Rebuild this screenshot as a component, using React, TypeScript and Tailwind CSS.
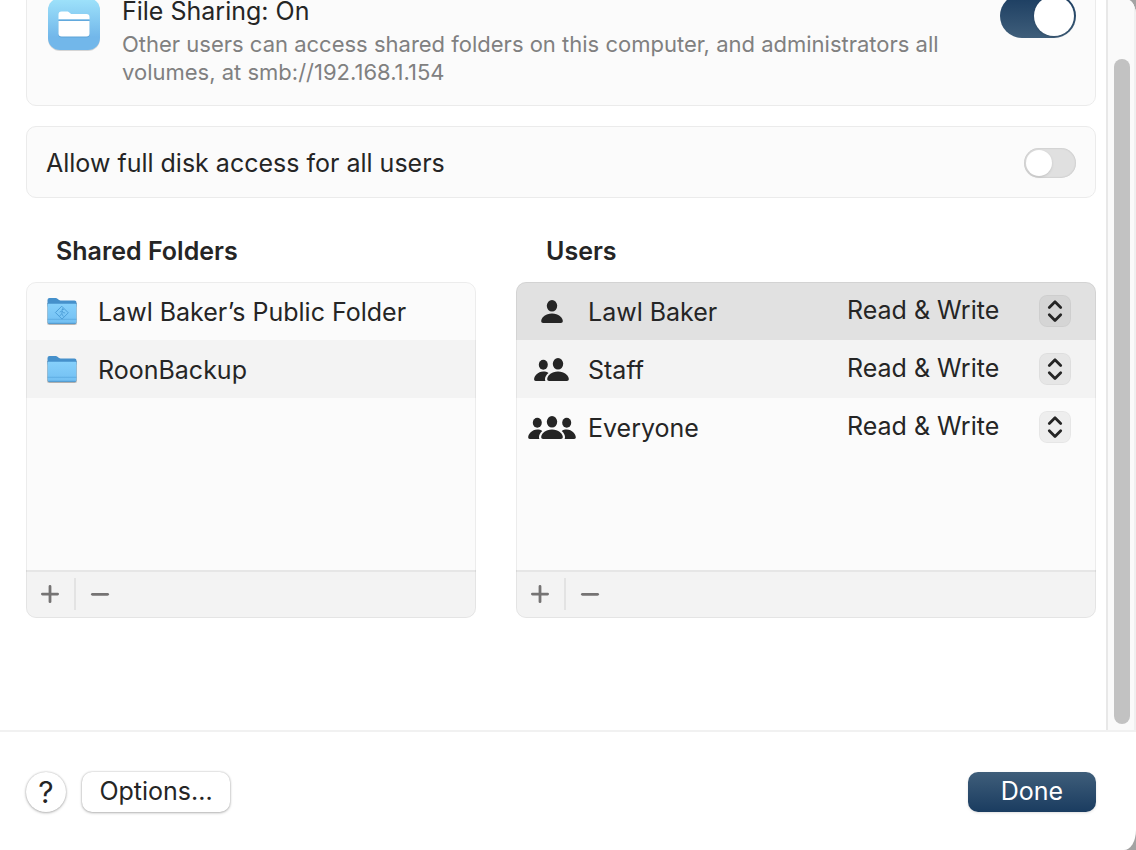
import { useState } from 'react';

const folders = [
  { name: 'Lawl Baker’s Public Folder', isPublic: true },
  { name: 'RoonBackup', isPublic: false },
];

const users = [
  { name: 'Lawl Baker', people: 1 },
  { name: 'Staff', people: 2 },
  { name: 'Everyone', people: 3 },
];

const permissions = ['Read & Write', 'Read Only', 'Write Only (Drop Box)'];

function FileSharingIcon() {
  return (
    <svg viewBox="0 0 54 54" className="h-[54px] w-[54px] shrink-0" aria-hidden="true">
      <defs>
        <linearGradient id="tile" x1="0" y1="0" x2="0" y2="1">
          <stop offset="0" stopColor="#9fe3fb" />
          <stop offset="0.75" stopColor="#72b7ea" />
        </linearGradient>
      </defs>
      <rect x="1" y="2" width="52" height="52" rx="12" fill="#000" opacity="0.15" />
      <rect x="1" y="1" width="52" height="52" rx="12" fill="url(#tile)" />
      <path d="M11.500 24h31v13.500a3 3 0 0 1-3 3h-25a3 3 0 0 1-3-3z" fill="#3e87bb" opacity="0.4" />
      <path d="M11.500 22.500v-5a3 3 0 0 1 3-3h5.500c2.500 0 2.800 2.500 5 2.500h14.500a3 3 0 0 1 3 3v2.500z" fill="#fff" />
      <path d="M11.500 22.500h31v1.500h-31z" fill="#62a9dd" />
      <path d="M11.500 24h31v12.500a3 3 0 0 1-3 3h-25a3 3 0 0 1-3-3z" fill="#fff" />
    </svg>
  );
}

function FolderIcon({ isPublic }: { isPublic: boolean }) {
  return (
    <svg viewBox="0 0 32 32" className="h-8 w-8 shrink-0" aria-hidden="true">
      <defs>
        <linearGradient id="folder" x1="0" y1="0" x2="0" y2="1">
          <stop offset="0" stopColor="#86d0fb" />
          <stop offset="1" stopColor="#72bff2" />
        </linearGradient>
      </defs>
      <path d="M1 8h30v20.500a1.500 1.500 0 0 1-1.500 1.500h-27A1.500 1.500 0 0 1 1 28.500z" fill="#000" opacity="0.15" />
      <path d="M1.500 8h29v19.500a2 2 0 0 1-2 2h-25a2 2 0 0 1-2-2z" fill="#000" opacity="0.3" />
      <path d="M1.500 5a2 2 0 0 1 2-2H10c1.800 0 2.200 2.500 4.500 2.500h14a2 2 0 0 1 2 2v4h-29z" fill="#4590cb" />
      <path d="M1.500 9.700a1 1 0 0 1 1-1h27a1 1 0 0 1 1 1V27a1.800 1.800 0 0 1-1.800 1.800H3.300A1.800 1.800 0 0 1 1.500 27z" fill="url(#folder)" />
      <path d="M1.500 24.300h29" stroke="#5aa8df" strokeWidth="0.8" />
      <path d="M2.800 28.300h26.400" stroke="#4d98cf" strokeWidth="1" strokeLinecap="round" />
      {isPublic && (
        <g fill="none" stroke="#4d9fd9" strokeLinejoin="round" strokeLinecap="round">
          <path d="M16 11.500l6.300 6.300-6.300 6.300-6.300-6.300z" strokeWidth="1" />
          <path d="M14 17l2-1.200 1.200 1.800 1.600.3M16.200 16l-.4 2.800 1.400 2.400M15.600 18.800l-1.600 2" strokeWidth="0.900" />
          <circle cx="16.600" cy="14.300" r="0.500" fill="#4d9fd9" />
        </g>
      )}
    </svg>
  );
}

function PeopleIcon({ count }: { count: number }) {
  if (count === 1) {
    return (
      <svg viewBox="0 0 48 28" className="h-7 w-12" fill="#252525" aria-hidden="true">
        <ellipse cx="24" cy="8.800" rx="5.200" ry="5.800" />
        <path d="M24 16.500c6.500 0 10.800 4.300 10.800 7.500 0 1.300-.7 1.900-2 1.900H15.200c-1.300 0-2-.6-2-1.900 0-3.200 4.300-7.500 10.800-7.500z" />
      </svg>
    );
  }
  if (count === 2) {
    return (
      <svg viewBox="0 0 48 28" className="h-7 w-12" fill="#252525" aria-hidden="true">
        <ellipse cx="15.300" cy="9.800" rx="4.500" ry="5" />
        <path d="M15.300 16.600c2 0 3.700.5 5.200 1.300-2.400 2-3.600 4.300-3.500 6.400 0 .6.100 1.100.4 1.600H7.700c-1 0-1.600-.6-1.600-1.600 0-3 3.700-7.700 9.200-7.700z" />
        <ellipse cx="30" cy="8.800" rx="5.200" ry="5.800" />
        <path d="M30 16.500c6.500 0 10.800 4.300 10.800 7.500 0 1.300-.7 1.900-2 1.900H21.200c-1.300 0-2-.6-2-1.900C19.200 20.800 23.500 16.500 30 16.500z" />
      </svg>
    );
  }
  return (
    <svg viewBox="0 0 48 28" className="h-7 w-12" fill="#252525" aria-hidden="true">
      <ellipse cx="9.300" cy="9.800" rx="4.500" ry="5" />
      <path d="M9.300 16.600c2 0 3.500.4 5 1.300-2.300 2-3.400 4.300-3.300 6.400 0 .6.100 1.100.4 1.600H1.800c-1 0-1.600-.6-1.600-1.600 0-3 3.700-7.700 9.100-7.700z" />
      <ellipse cx="38.700" cy="9.800" rx="4.500" ry="5" />
      <path d="M38.700 16.600c-2 0-3.500.4-5 1.300 2.300 2 3.400 4.300 3.300 6.400 0 .6-.1 1.100-.4 1.600h9.600c1 0 1.600-.6 1.600-1.600 0-3-3.700-7.700-9.100-7.700z" />
      <ellipse cx="24" cy="8.800" rx="5.200" ry="5.800" />
      <path d="M24 16.500c6.500 0 10.800 4.300 10.800 7.500 0 1.300-.7 1.900-2 1.900H15.200c-1.300 0-2-.6-2-1.900 0-3.200 4.300-7.500 10.800-7.500z" />
    </svg>
  );
}

function ListActions({ label }: { label: string }) {
  return (
    <div className="flex h-12 items-center border-t-2 border-[#e6e6e6] bg-[#f3f3f3] text-[#757373]">
      <button type="button" aria-label={`Add ${label}`} className="flex h-full w-12 items-center justify-center">
        <svg viewBox="0 0 20 20" className="h-5 w-5" stroke="currentColor" strokeWidth="2.800" strokeLinecap="round" aria-hidden="true">
          <path d="M10 1.500v15.200M2.400 9.100h15.200" />
        </svg>
      </button>
      <div className="mb-0.5 h-8 w-0.5 bg-[#e3e3e3]" />
      <button type="button" aria-label={`Remove ${label}`} className="flex h-full w-12 items-center justify-center">
        <svg viewBox="0 0 20 20" className="h-5 w-5" stroke="currentColor" strokeWidth="2.800" strokeLinecap="round" aria-hidden="true">
          <path d="M2.400 9.300h15.200" />
        </svg>
      </button>
    </div>
  );
}

function PermissionSelect({ user }: { user: string }) {
  return (
    <div className="relative">
      <select
        aria-label={`Permission for ${user}`}
        defaultValue={permissions[0]}
        className="block h-8 w-full appearance-none bg-transparent pb-0.5 leading-7 outline-none"
      >
        {permissions.map(permission => (
          <option key={permission}>{permission}</option>
        ))}
      </select>
      <span className="pointer-events-none absolute top-0 right-0 rounded-lg bg-black/5 outline -outline-offset-1 outline-black/3">
        <svg viewBox="0 0 32 32" className="h-8 w-8" fill="none" stroke="#252525" strokeWidth="2.800" strokeLinecap="round" strokeLinejoin="round" aria-hidden="true">
          <path d="M10.300 12.400L16 6.700l5.700 5.700M10.300 19.800l5.700 5.700 5.700-5.700" />
        </svg>
      </span>
    </div>
  );
}

export default function App() {
  const [sharing, setSharing] = useState(true);
  const [diskAccess, setDiskAccess] = useState(false);
  const [selected, setSelected] = useState(0);

  return (
    <div className="flex min-h-screen bg-[#a3a3a3] font-[Inter,'Liberation_Sans',sans-serif] text-[25px] leading-7 text-[#252525] [font-optical-sizing:none]">
      <div className="flex flex-1 flex-col overflow-hidden rounded-tr-[8px_16px] rounded-br-[12px_20px] bg-white">
        <div className="flex flex-1">
          <main className="-mt-6 flex-1 pr-2.5 pb-6 pl-[26px]">
            <section className="flex items-start rounded-[10px] border border-[#ebebeb] bg-[#fbfbfb] pt-5 pr-[19px] pb-[19px] pl-5">
              <FileSharingIcon />
              <div className="ml-[21px] flex-1 pt-1">
                <label htmlFor="file-sharing" className="block leading-5">File Sharing: On</label>
                <p className="mt-[9px] text-[22px] text-[#808080]">
                  Other users can access shared folders on this computer, and administrators all
                  <br />
                  volumes, at smb://192.168.1.154
                </p>
              </div>
              <input
                id="file-sharing"
                type="checkbox"
                role="switch"
                checked={sharing}
                onChange={e => setSharing(e.target.checked)}
                className="-mt-[3px] flex h-11 w-[76px] shrink-0 appearance-none items-center rounded-full bg-[#e0e0e0] p-0.5 before:h-10 before:w-10 before:rounded-full before:bg-white before:shadow checked:justify-end checked:bg-linear-to-b checked:from-[#1a3c60] checked:to-[#3f5e7a]"
              />
            </section>

            <section className="mt-5 flex h-[72px] items-center justify-between rounded-[10px] border border-[#ebebeb] bg-[#fbfbfb] pt-0.5 pr-[19px] pl-[19px]">
              <label htmlFor="disk-access">Allow full disk access for all users</label>
              <input
                id="disk-access"
                type="checkbox"
                role="switch"
                checked={diskAccess}
                onChange={e => setDiskAccess(e.target.checked)}
                className="flex h-[30px] w-[52px] appearance-none items-center rounded-full bg-[#e0e0e0] p-0.5 inset-shadow-[0_0_2px_rgba(0,0,0,0.2)] before:h-[26px] before:w-[26px] before:rounded-full before:bg-white before:shadow checked:justify-end checked:bg-[#294b6d]"
              />
            </section>

            <div className="mt-[39px] grid grid-cols-[45fr_58fr] gap-10">
              <section>
                <h2 className="pl-[30px] font-semibold">Shared Folders</h2>
                <div className="mt-[17px] flex h-[336px] flex-col overflow-hidden rounded-[10px] bg-[#fbfbfb] outline -outline-offset-1 outline-black/6">
                  <ul className="flex-1">
                    {folders.map(folder => (
                      <li key={folder.name} className="flex h-[58px] items-center gap-5 pl-5 even:bg-[#f3f3f3]">
                        <FolderIcon isPublic={folder.isPublic} />
                        <span className="pt-0.5">{folder.name}</span>
                      </li>
                    ))}
                  </ul>
                  <ListActions label="folder" />
                </div>
              </section>

              <section>
                <h2 className="pl-[30px] font-semibold">Users</h2>
                <div className="mt-[17px] flex h-[336px] flex-col overflow-hidden rounded-[10px] bg-[#fbfbfb] outline -outline-offset-1 outline-black/6">
                  <div className="flex-1">
                    <table className="w-full table-fixed">
                      <tbody>
                        {users.map((user, index) => (
                          <tr
                            key={user.name}
                            onClick={() => setSelected(index)}
                            className={`h-[58px] ${index === selected ? 'bg-[#e1e1e1]' : 'even:bg-[#f3f3f3]'}`}
                          >
                            <td className="w-[72px] pl-3">
                              <PeopleIcon count={user.people} />
                            </td>
                            <td className="pt-0.5">{user.name}</td>
                            <td className="w-[249px] pr-[25px]">
                              <PermissionSelect user={user.name} />
                            </td>
                          </tr>
                        ))}
                      </tbody>
                    </table>
                  </div>
                  <ListActions label="user" />
                </div>
              </section>
            </div>
          </main>

          <div className="flex w-[30px] flex-col border-r-2 border-l-2 border-r-[#f0f0f0] border-l-[#e8e8e8] bg-[#fafafa] px-1 pt-[59px] pb-1.5 pl-1.5">
            <div className="w-4 flex-1 rounded-full bg-[#c2c2c2]" />
          </div>
        </div>

        <footer className="flex items-center border-t-2 border-[#f1f1f1] px-[26px] pt-10 pb-[38px]">
          <button type="button" aria-label="Help" className="h-10 w-10 rounded-full bg-white text-[30px] shadow-[0_0_2px_rgba(0,0,0,0.25),0_1px_3px_rgba(0,0,0,0.25)]">
            ?
          </button>
          <button type="button" className="ml-4 h-10 w-[148px] rounded-[10px] bg-white pb-0.5 shadow-[0_0_2px_rgba(0,0,0,0.25),0_1px_3px_rgba(0,0,0,0.25)]">
            Options...
          </button>
          <button type="button" className="mr-3.5 ml-auto h-10 w-32 rounded-[10px] bg-linear-to-b from-[#3f5e7a] to-[#1a3c60] pb-0.5 text-white shadow-sm">
            Done
          </button>
        </footer>
      </div>
    </div>
  );
}
